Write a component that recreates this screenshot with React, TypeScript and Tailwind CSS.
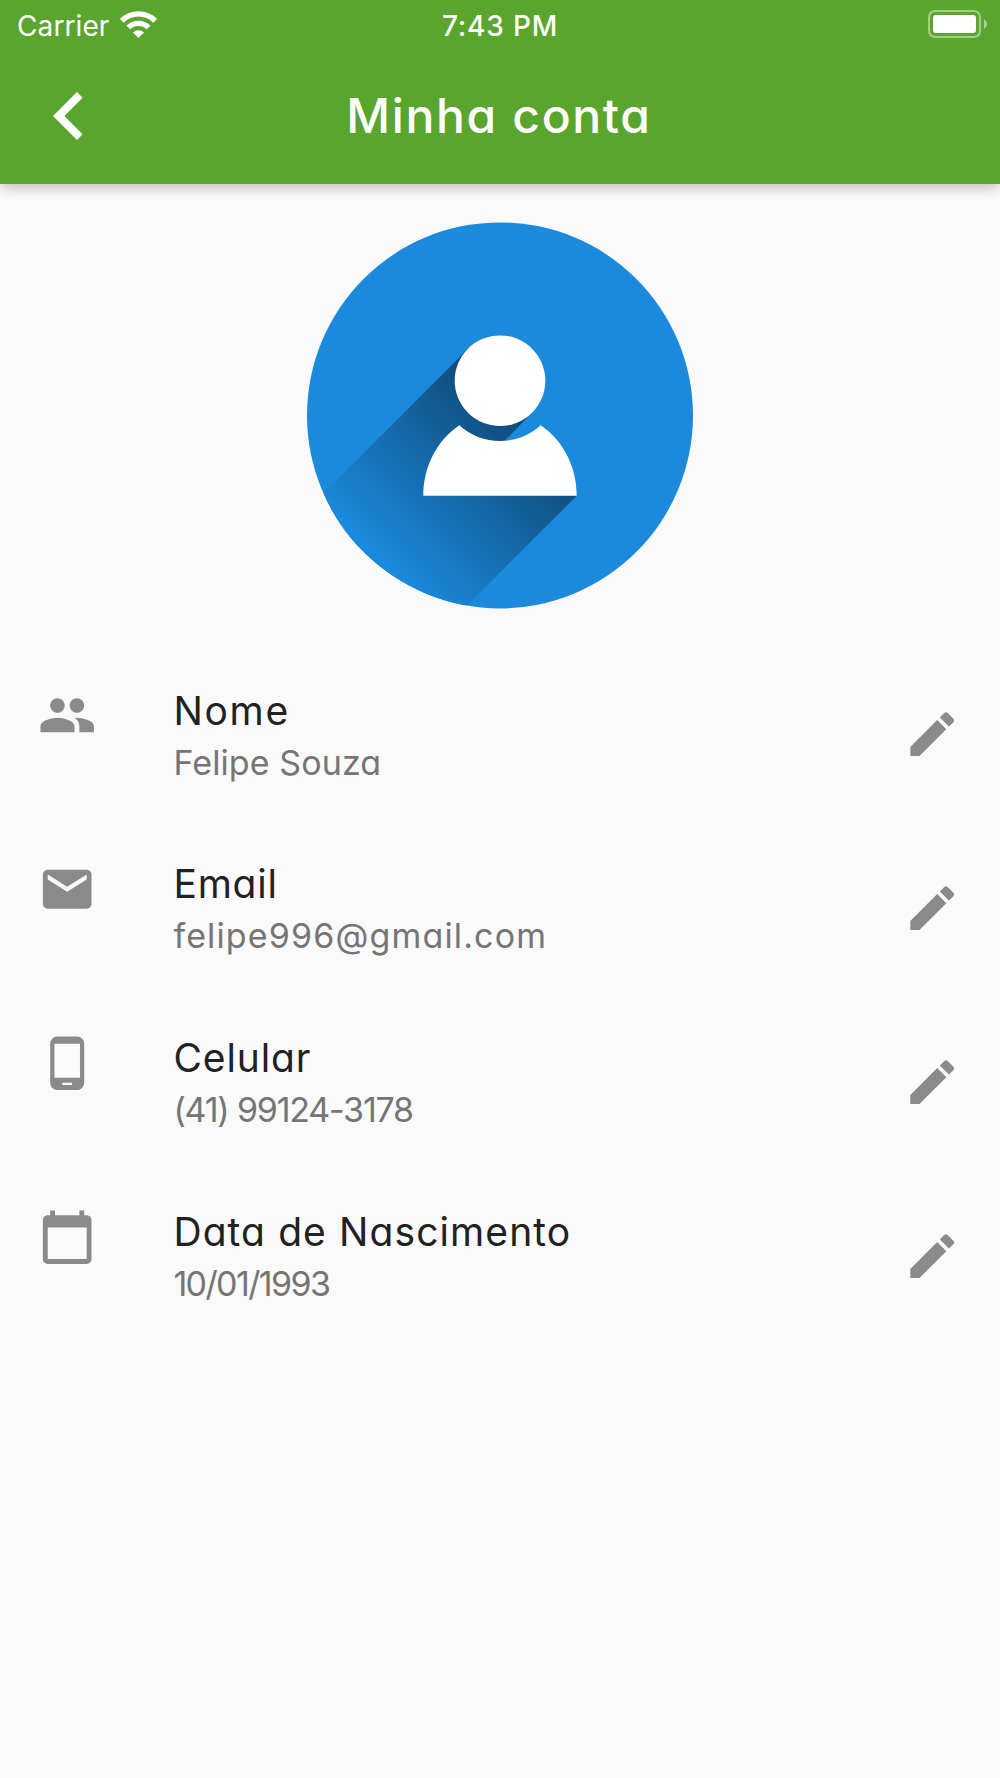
import React from 'react';
import { MdCalendarToday, MdChevronLeft, MdEdit, MdEmail, MdPeople, MdPhoneAndroid } from 'react-icons/md';

const fields = [
  { icon: MdPeople, label: 'Nome', value: 'Felipe Souza', labelClass: 'tracking-[1.7px]', valueClass: 'tracking-[0.1px]' },
  { icon: MdEmail, label: 'Email', value: 'felipe996@gmail.com', labelClass: 'tracking-[0.8px]', valueClass: 'tracking-[1.15px]' },
  { icon: MdPhoneAndroid, label: 'Celular', value: '(41) 99124-3178', labelClass: 'tracking-[0.9px]', valueClass: 'tracking-[-1.2px]' },
  { icon: MdCalendarToday, label: 'Data de Nascimento', value: '10/01/1993', labelClass: 'tracking-[1.1px]', valueClass: 'tracking-[-1.6px]' },
];

const App = () => {
  return (
    <div className="h-[1778px] w-[1000px] overflow-hidden bg-[#fafafa] font-['Inter',sans-serif]">
      <header className="relative h-[184px] bg-[#5aa52d] text-white shadow-[0_3px_13px_rgba(0,0,0,0.26)]">
        <StatusBar />
        <div className="grid h-[132px] grid-cols-[1fr_auto_1fr] items-center">
          <MdChevronLeft className="ml-[21px] size-24" />
          <h1 className="pr-[2px] text-[48px] leading-none font-medium tracking-[1.65px] whitespace-nowrap [font-feature-settings:'cv11']">
            Minha conta
          </h1>
        </div>
      </header>
      <main>
        <div className="flex justify-center pt-[38px]">
          <Avatar />
        </div>
        <ul className="pt-[60px]">
          {fields.map((field) => (
            <ProfileField key={field.label} {...field} />
          ))}
        </ul>
      </main>
    </div>
  );
};

const StatusBar = () => {
  return (
    <div className="grid h-[50px] grid-cols-3 items-center px-[13px]">
      <div className="flex items-center gap-[11px] pl-1">
        <span className="pt-[2px] text-[28px] leading-none tracking-[0.1px]">Carrier</span>
        <svg className="mb-[2px] h-[27px] w-[37px]" viewBox="0 0 37 27" fill="none">
          <path d="M1.8 9.800a23.6 23.6 0 0 1 33.4 0" stroke="currentColor" strokeWidth="5.4" />
          <path d="M8.400 16.500a14.3 14.3 0 0 1 20.2 0" stroke="currentColor" strokeWidth="5.2" />
          <path d="M13 21.500a7.8 7.8 0 0 1 11 0L18.5 27z" fill="currentColor" />
        </svg>
      </div>
      <span className="pt-[2px] text-center text-[28px] leading-none font-medium tracking-[0.8px]">7:43 PM</span>
      <svg className="mb-[2px] h-7 w-[60px] justify-self-end" viewBox="0 0 60 28" fill="none">
        <rect x="2" y="1" width="51" height="26" rx="6" stroke="currentColor" strokeOpacity="0.45" strokeWidth="2" />
        <rect x="6" y="5" width="43" height="18" rx="3" fill="currentColor" />
        <path d="M57 9.200c4 2 4 7.600 0 9.600z" fill="currentColor" fillOpacity="0.5" />
      </svg>
    </div>
  );
};

const Avatar = () => {
  return (
    <svg className="size-[386px] overflow-visible" viewBox="307 222 386 386">
      <defs>
        <linearGradient id="long-shadow" gradientUnits="userSpaceOnUse" x1="520" y1="415" x2="378" y2="557">
          <stop offset="0" stopColor="#0f4a78" />
          <stop offset="1" stopColor="#1b89dc" />
        </linearGradient>
        <clipPath id="disc">
          <circle cx="500" cy="415.400" r="193" />
        </clipPath>
      </defs>
      <circle cx="500" cy="415.400" r="193" fill="#1b89dc" />
      <path
        d="M468 348.700 532 412.700 504.500 441 500 490 576.700 495.700 460 612.400 290 612.400 290 526.700z"
        fill="url(#long-shadow)"
        clipPath="url(#disc)"
      />
      <circle cx="500" cy="380.700" r="45.300" fill="#fff" />
      <path
        d="M423.300 495.700C423.300 466 437.500 440 459.300 425.300A60.400 60.400 0 0 0 540.700 425.300C562.500 440 576.700 466 576.700 495.700z"
        fill="#fff"
      />
    </svg>
  );
};

type ProfileFieldProps = {
  icon: React.ComponentType<{ className?: string }>;
  label: string;
  value: string;
  labelClass: string;
  valueClass: string;
};

const ProfileField = ({ icon: Icon, label, value, labelClass, valueClass }: ProfileFieldProps) => {
  return (
    <li className="flex h-[173.900px] items-start pr-[39px] pl-[38px] text-[#8a8a8a]">
      <Icon className="mt-[18px] size-[58.400px] shrink-0" />
      <div className="ml-[77px] flex-1 pt-[17.500px] whitespace-nowrap [font-feature-settings:'cv11']">
        <p className={`text-[39px] leading-[50px] text-[#212121] ${labelClass}`}>{label}</p>
        <p className={`text-[34px] leading-[54px] text-[#757575] ${valueClass}`}>{value}</p>
      </div>
      <MdEdit className="mt-[37px] size-[58.400px] shrink-0" />
    </li>
  );
};

export default App;
